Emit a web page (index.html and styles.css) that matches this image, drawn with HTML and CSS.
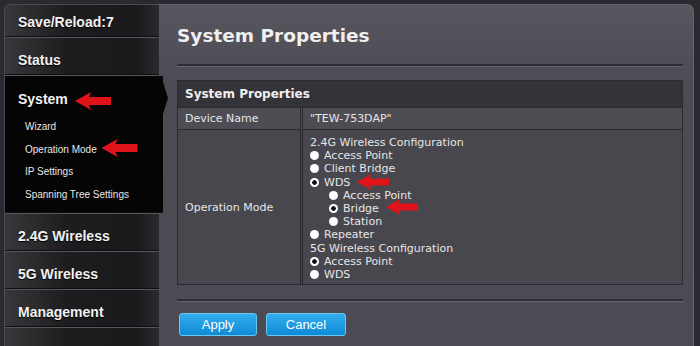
FILE: index.html
```html
<!DOCTYPE html>
<html lang="en">
<head>
    <meta charset="UTF-8">
    <meta name="viewport" content="width=device-width, initial-scale=1.0">
    <title>System Properties</title>
    <link rel="stylesheet" href="styles.css">
</head>
<body>
    <div class="page">
        <nav class="sidebar">
            <div class="menu-item first">Save/Reload:7</div>
            <div class="menu-item">Status</div>
            <div class="menu-item active">
                <div class="menu-title">System</div>
                <ul class="submenu">
                    <li>Wizard</li>
                    <li>Operation Mode</li>
                    <li>IP Settings</li>
                    <li>Spanning Tree Settings</li>
                </ul>
            </div>
            <div class="menu-item">2.4G Wireless</div>
            <div class="menu-item">5G Wireless</div>
            <div class="menu-item">Management</div>
        </nav>

        <main class="content">
            <h1>System Properties</h1>
            <div class="rule"></div>
            <table class="props">
                <tr>
                    <th colspan="2">System Properties</th>
                </tr>
                <tr class="row-name">
                    <td class="label">Device Name</td>
                    <td class="value">"TEW-753DAP"</td>
                </tr>
                <tr class="row-mode">
                    <td class="label">Operation Mode</td>
                    <td class="value">
                        <div class="opt">2.4G Wireless Configuration</div>
                        <div class="opt"><span class="radio"></span>Access Point</div>
                        <div class="opt"><span class="radio"></span>Client Bridge</div>
                        <div class="opt"><span class="radio checked"></span>WDS</div>
                        <div class="opt sub"><span class="radio"></span>Access Point</div>
                        <div class="opt sub"><span class="radio checked"></span>Bridge</div>
                        <div class="opt sub"><span class="radio"></span>Station</div>
                        <div class="opt"><span class="radio"></span>Repeater</div>
                        <div class="opt">5G Wireless Configuration</div>
                        <div class="opt"><span class="radio checked"></span>Access Point</div>
                        <div class="opt"><span class="radio"></span>WDS</div>
                    </td>
                </tr>
            </table>
            <div class="rule rule-bottom"></div>
            <div class="actions">
                <button class="btn btn-apply">Apply</button>
                <button class="btn btn-cancel">Cancel</button>
            </div>
        </main>
    </div>

    <!-- red annotation arrows drawn over the screenshot -->
    <svg class="arrow arrow-system" viewBox="0 0 36 18"><path d="M0 9 L16 0 L14 5 L36 5 L36 13 L14 13 L16 18 Z"/></svg>
    <svg class="arrow arrow-mode" viewBox="0 0 36 18"><path d="M0 9 L16 0 L14 5 L36 5 L36 13 L14 13 L16 18 Z"/></svg>
    <svg class="arrow arrow-wds" viewBox="0 0 36 18"><path d="M0 9 L16 0 L14 5 L36 5 L36 13 L14 13 L16 18 Z"/></svg>
    <svg class="arrow arrow-bridge" viewBox="0 0 36 18"><path d="M0 9 L16 0 L14 5 L36 5 L36 13 L14 13 L16 18 Z"/></svg>
</body>
</html>
```

FILE: styles.css
```css
html, body {
    margin: 0;
    height: 100%;
}
body {
    background-color: #2a2a30;
    font-family: "DejaVu Sans", Verdana, sans-serif;
    position: relative;
    overflow: hidden;
}
.page {
    display: flex;
    min-height: 100vh;
    box-sizing: border-box;
    padding: 4px 6px 0 4px;
}

/* sidebar */
.sidebar {
    width: 154px;
    flex-shrink: 0;
    position: relative;
    z-index: 2;
    background: linear-gradient(to right, #38383b, #1d1d1f 40%, #1a1a1c 85%, #2b2b2f);
    border-top: 1px solid #4a4a50;
    border-left: 1px solid #4a4a50;
    border-radius: 6px 0 0 0;
    font-family: "Liberation Sans", Arial, sans-serif;
    color: #f2f2f2;
}
.menu-item {
    font-size: 14px;
    font-weight: bold;
    line-height: 16px;
    padding: 14px 0 7px 13px;
    border-bottom: 1px solid #57565b;
    box-shadow: inset 0 -1px 0 #0e0e10;
    text-shadow: 0 1px 1px #000;
}
.menu-item.first {
    padding-top: 9px;
}
.menu-item.active {
    position: relative;
    background: #050505;
    margin-right: -4px;
    padding-top: 15px;
    padding-bottom: 6px;
}
.menu-item.active::after {
    content: "";
    position: absolute;
    right: -5px;
    top: 6px;
    border-top: 16px solid transparent;
    border-bottom: 16px solid transparent;
    border-left: 5px solid #050505;
}
.submenu {
    list-style: none;
    margin: 9px 0 0 7px;
    padding: 0;
}
.submenu li {
    font-size: 10px;
    font-weight: normal;
    line-height: 22.7px;
    color: #e8e8e8;
}

/* main panel */
.content {
    flex: 1;
    background: linear-gradient(to bottom, #57565e, #4d4c54 80px, #4c4b53);
    border-top: 1px solid #65646b;
    border-right: 1px solid #65646b;
    border-radius: 0 7px 0 0;
    padding: 20px 10px 0 18px;
    color: #e6e6e6;
}
h1 {
    margin: 0;
    font-size: 18.5px;
    line-height: 22px;
    font-weight: bold;
    color: #efefef;
}
.rule {
    margin-top: 17px;
    border-top: 2px solid #2e2d33;
    border-bottom: 1px solid #66656c;
}
.rule-bottom {
    margin-top: 14px;
}

.props {
    width: 100%;
    margin-top: 13px;
    border-collapse: collapse;
    border: 1px solid #2b2a30;
    font-size: 11px;
}
.props th {
    height: 26px;
    padding: 0 7px;
    text-align: left;
    font-size: 12px;
    font-weight: bold;
    background-color: #343339;
    color: #efefef;
    border-bottom: 1px solid #2b2a30;
}
.props td {
    border: 1px solid #2b2a30;
    padding: 0 7px;
}
.props .label {
    width: 108px;
    border-right: 3px double #2b2a30;
}
.row-name td {
    height: 21px;
    background-color: #4e4d54;
}
.row-mode td {
    background-color: #48474e;
}
.row-mode .value {
    padding: 6px 8px 3px 7px;
}
.opt {
    display: flex;
    align-items: center;
    gap: 5px;
    height: 13.2px;
    line-height: 13px;
    white-space: nowrap;
}
.opt.sub {
    padding-left: 19px;
}
.radio {
    width: 9px;
    height: 9px;
    border-radius: 50%;
    background: radial-gradient(circle at 45% 40%, #ffffff 55%, #c8c8cc);
    flex-shrink: 0;
}
.radio.checked {
    background: radial-gradient(circle, #111 0 2px, #ffffff 2.6px);
}

.actions {
    display: flex;
    gap: 9px;
    margin-top: 11px;
    padding-left: 2px;
}
.btn {
    height: 23px;
    width: 78px;
    border: 1px solid #69c6f2;
    border-radius: 3px;
    background: linear-gradient(to bottom, #35acec, #0d8bd6);
    color: #fff;
    font-family: "Liberation Sans", Arial, sans-serif;
    font-size: 13px;
    padding: 0;
}
.btn-cancel {
    width: 80px;
}

/* annotation arrows */
.arrow {
    position: absolute;
    fill: #e0131b;
    z-index: 5;
}
.arrow-system {
    left: 75px;
    top: 92px;
    width: 36px;
    height: 18px;
}
.arrow-mode {
    left: 101px;
    top: 139px;
    width: 37px;
    height: 18px;
}
.arrow-wds {
    left: 354px;
    top: 174px;
    width: 38px;
    height: 16px;
}
.arrow-bridge {
    left: 385px;
    top: 199px;
    width: 34px;
    height: 16px;
}
```
